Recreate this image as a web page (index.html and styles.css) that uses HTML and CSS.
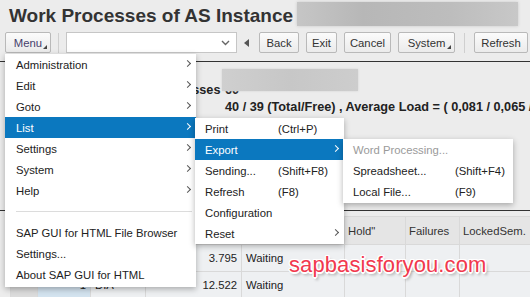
FILE: index.html
```html
<!DOCTYPE html>
<html>
<head>
    <meta charset="UTF-8">
    <title>Work Processes of AS Instance</title>
    <link rel="stylesheet" href="styles.css">
</head>
<body>
    <div class="titlebar">
        <h1>Work Processes of AS Instance</h1>
        <div class="redact redact-title"></div>
    </div>

    <div class="toolbar">
        <button class="btn btn-menu drop">Menu</button>
        <span class="sep"></span>
        <div class="combo">
            <svg width="9" height="6" viewBox="0 0 9 6"><path d="M1 1 L4.5 4.5 L8 1" fill="none" stroke="#666" stroke-width="1.4"/></svg>
        </div>
        <span class="back-tri"></span>
        <button class="btn w-back">Back</button>
        <button class="btn w-exit">Exit</button>
        <button class="btn w-cancel">Cancel</button>
        <button class="btn w-system drop">System</button>
        <span class="sep sep-wide"></span>
        <button class="btn w-refresh">Refresh</button>
    </div>

    <div class="rule"></div>

    <div class="info">
        <div class="redact redact-info"></div>
        <div class="info-label">Number of Work Processes</div>
        <div class="info-value">60</div>
        <div class="info-label">Dialog</div>
        <div class="info-value">40 / 39 (Total/Free) , Average Load = ( 0,081 / 0,065 / 0,052 )</div>
        <div class="info-label">Background</div>
        <div class="info-value">14 / 14 (Total/Free)</div>
    </div>

    <div class="rule"></div>

    <table class="grid">
        <colgroup>
            <col style="width:27px"><col style="width:53px"><col style="width:55px"><col style="width:96px">
            <col style="width:103px"><col style="width:61px"><col style="width:54px"><col style="width:71px">
        </colgroup>
        <thead>
            <tr>
                <th class="sel"></th><th>No.</th><th>Type</th><th>PID</th>
                <th>Status</th><th>Hold"</th><th>Failures</th><th>LockedSem.</th>
            </tr>
        </thead>
        <tbody>
            <tr>
                <td class="sel"></td><td class="num key">0</td><td>DIA</td><td class="num">3.795</td>
                <td>Waiting</td><td></td><td></td><td></td>
            </tr>
            <tr>
                <td class="sel"></td><td class="num key">1</td><td>DIA</td><td class="num">12.522</td>
                <td>Waiting</td><td></td><td></td><td></td>
            </tr>
        </tbody>
    </table>

    <div class="watermark">sapbasisforyou.com</div>

    <!-- open menus -->
    <div class="menu menu-main">
        <div class="item">Administration<span class="chev"></span></div>
        <div class="item">Edit<span class="chev"></span></div>
        <div class="item">Goto<span class="chev"></span></div>
        <div class="item active">List<span class="chev"></span></div>
        <div class="item">Settings<span class="chev"></span></div>
        <div class="item">System<span class="chev"></span></div>
        <div class="item">Help<span class="chev"></span></div>
        <div class="divider"></div>
        <div class="item">SAP GUI for HTML File Browser</div>
        <div class="item">Settings...</div>
        <div class="item">About SAP GUI for HTML</div>
    </div>

    <div class="menu menu-list">
        <div class="item"><span class="lbl">Print</span>(Ctrl+P)</div>
        <div class="item active"><span class="lbl">Export</span><span class="chev"></span></div>
        <div class="item"><span class="lbl">Sending...</span>(Shift+F8)</div>
        <div class="item"><span class="lbl">Refresh</span>(F8)</div>
        <div class="item"><span class="lbl">Configuration</span></div>
        <div class="item"><span class="lbl">Reset</span><span class="chev"></span></div>
    </div>

    <div class="menu menu-export">
        <div class="item disabled"><span class="lbl">Word Processing...</span></div>
        <div class="item"><span class="lbl">Spreadsheet...</span>(Shift+F4)</div>
        <div class="item"><span class="lbl">Local File...</span>(F9)</div>
    </div>
</body>
</html>
```

FILE: styles.css
```css
body { margin: 0; width: 530px; height: 297px; overflow: hidden; position: relative; background: #ececec; font-family: "Liberation Sans", Arial, sans-serif; font-size: 11.3px; color: #222; }

.titlebar { height: 31px; display: flex; align-items: center; padding-left: 9px; gap: 4px; }
h1 { margin: 0; font-size: 19px; font-weight: bold; color: #333; white-space: nowrap; }
.redact { background: linear-gradient(90deg, #c6c6c6, #b7b7b7 30%, #bdbdbd 70%, #c8c8c8); box-shadow: 0 0 3px #c8c8c8; }
.redact-title { width: 221px; height: 24px; margin-top: -3px; }

.toolbar { display: flex; align-items: center; gap: 7px; height: 21px; margin-top: 1px; padding-left: 5px; }
.btn { position: relative; height: 21px; box-sizing: border-box; padding: 0; border: 1px solid #b9b9b9; border-radius: 2px; background: linear-gradient(#fbfbfb, #ebebeb); font-family: inherit; font-size: 11.3px; color: #333; }
.btn-menu { width: 46px; color: #463f6c; }
.drop::after { content: ""; position: absolute; right: 3px; bottom: 3px; border-left: 4px solid transparent; border-bottom: 4px solid #444; }
.w-back { width: 40px; }
.w-exit { width: 31px; }
.w-cancel { width: 47px; }
.w-system { width: 57px; }
.w-refresh { width: 54px; }
.sep { width: 1px; height: 20px; background: #cfcfcf; }
.sep-wide { margin: 0 2px; }
.combo { width: 171px; height: 21px; box-sizing: border-box; border: 1px solid #c6c6c6; background: #fff; display: flex; align-items: center; justify-content: flex-end; padding-right: 6px; }
.back-tri { width: 8px; height: 8px; display: flex; align-items: center; }
.back-tri::before { content: ""; border-top: 4px solid transparent; border-bottom: 4px solid transparent; border-right: 5px solid #555; }

.rule { height: 1px; background: #333; margin-top: 8px; }

.info { position: relative; height: 148px; box-sizing: border-box; padding: 21px 0 0 55px; display: grid; grid-template-columns: 170px 1fr; grid-auto-rows: 16.5px; align-content: start; font-size: 12.7px; font-weight: bold; color: #222; white-space: nowrap; }
.info + .rule { margin-top: 0; }
.redact-info { position: absolute; left: 222px; top: 7px; width: 136px; height: 22px; background: linear-gradient(90deg, #cfcfcf, #c7c7c7 50%, #cdcdcd); box-shadow: 0 0 2px #d0d0d0; }

.grid { margin: 5px 0 0 10px; width: 520px; table-layout: fixed; border-collapse: collapse; }
.grid th, .grid td { height: 26px; padding: 0 4px; border: 1px solid #d9d9d9; text-align: left; white-space: nowrap; overflow: hidden; }
.grid th { height: 27px; background: #e5e5e5; font-weight: normal; color: #333; padding-left: 3px; }
.grid td { background: #eef0f2; color: #222; }
.grid td.num { text-align: right; }
.grid .sel { background: #dcdcdc; }
.grid td.key { background: #d3e3ef; }

.watermark { position: absolute; left: 289px; top: 252px; font-size: 22px; color: #f1394e; letter-spacing: 0.1px;
  text-shadow: -1.5px 0 #fff, 1.5px 0 #fff, 0 -1.5px #fff, 0 1.5px #fff, -1px -1px #fff, 1px 1px #fff, -1px 1px #fff, 1px -1px #fff, 2px 3px 3px rgba(0,0,0,.35); }

.menu { position: absolute; background: #fff; box-shadow: 0 2px 6px rgba(0,0,0,.3); }
.menu .item { position: relative; height: 21px; display: flex; align-items: center; white-space: nowrap; color: #222; }
.menu .item.active { background: #0b78bf; color: #fff; }
.menu .item.disabled { color: #9a9a9a; }
.chev { position: absolute; right: 6px; top: 7px; width: 4px; height: 4px; border-top: 1.6px solid #555; border-right: 1.6px solid #555; transform: rotate(45deg); }
.active .chev { border-color: #fff; }

.menu-main { left: 5px; top: 54px; width: 191px; padding-bottom: 2px; }
.menu-main .item { padding-left: 11px; }
.menu-main .divider { height: 21px; display: flex; align-items: center; padding: 0 4px 0 11px; }
.menu-main .divider::before { content: ""; flex: 1; height: 1px; background: #dcdcdc; }

.menu-list { left: 195px; top: 118px; width: 149px; }
.menu-list .item { padding-left: 10px; }
.menu-list .lbl { width: 73px; }

.menu-export { left: 343px; top: 139px; width: 170px; padding-bottom: 1px; }
.menu-export .item { padding-left: 10px; }
.menu-export .lbl { width: 102px; }
```
